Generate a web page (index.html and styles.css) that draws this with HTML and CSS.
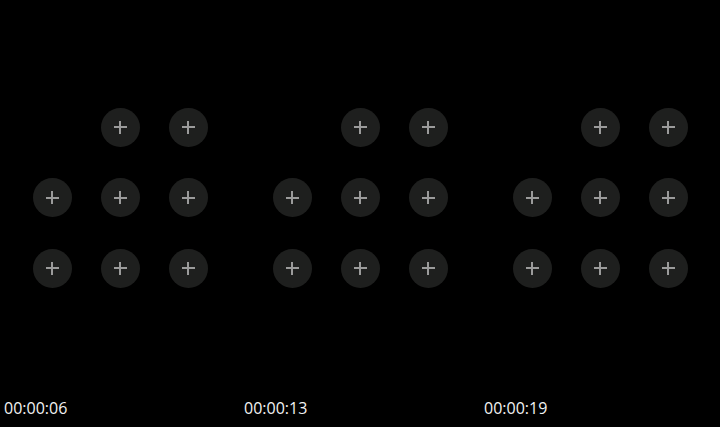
FILE: index.html
```html
<!DOCTYPE html>
<html>
<head>
<meta charset="utf-8">
<link rel="stylesheet" href="styles.css">
</head>
<body>
<div class="strip">
  <section class="panel">
    <div class="grid">
      <div class="slot empty"></div>
      <button class="slot"><span class="plus"></span></button>
      <button class="slot"><span class="plus"></span></button>
      <button class="slot"><span class="plus"></span></button>
      <button class="slot"><span class="plus"></span></button>
      <button class="slot"><span class="plus"></span></button>
      <button class="slot"><span class="plus"></span></button>
      <button class="slot"><span class="plus"></span></button>
      <button class="slot"><span class="plus"></span></button>
    </div>
    <div class="time">00:00:06</div>
  </section>
  <section class="panel">
    <div class="grid">
      <div class="slot empty"></div>
      <button class="slot"><span class="plus"></span></button>
      <button class="slot"><span class="plus"></span></button>
      <button class="slot"><span class="plus"></span></button>
      <button class="slot"><span class="plus"></span></button>
      <button class="slot"><span class="plus"></span></button>
      <button class="slot"><span class="plus"></span></button>
      <button class="slot"><span class="plus"></span></button>
      <button class="slot"><span class="plus"></span></button>
    </div>
    <div class="time">00:00:13</div>
  </section>
  <section class="panel">
    <div class="grid">
      <div class="slot empty"></div>
      <button class="slot"><span class="plus"></span></button>
      <button class="slot"><span class="plus"></span></button>
      <button class="slot"><span class="plus"></span></button>
      <button class="slot"><span class="plus"></span></button>
      <button class="slot"><span class="plus"></span></button>
      <button class="slot"><span class="plus"></span></button>
      <button class="slot"><span class="plus"></span></button>
      <button class="slot"><span class="plus"></span></button>
    </div>
    <div class="time">00:00:19</div>
  </section>
</div>
</body>
</html>
```
FILE: styles.css
```css
html, body {
  margin: 0;
  padding: 0;
  background: #000;
  width: 720px;
  height: 427px;
  overflow: hidden;
}
.strip {
  display: flex;
  height: 427px;
}
.panel {
  width: 240px;
  height: 427px;
  display: flex;
  flex-direction: column;
}
.grid {
  display: grid;
  grid-template-columns: repeat(3, 39px);
  grid-auto-rows: 39px;
  column-gap: 29px;
  row-gap: 31.5px;
  padding: 107.5px 0 0 32.5px;
}
.slot {
  width: 39px;
  height: 39px;
  border: 0;
  padding: 0;
  margin: 0;
  border-radius: 50%;
  background: #1e1f1e;
  display: flex;
  align-items: center;
  justify-content: center;
}
.slot.empty {
  visibility: hidden;
}
.plus {
  position: relative;
  width: 13px;
  height: 13px;
  display: block;
}
.plus::before,
.plus::after {
  content: "";
  position: absolute;
  background: #9b9b9b;
}
.plus::before {
  left: 0;
  top: 5.5px;
  width: 13px;
  height: 2px;
}
.plus::after {
  top: 0;
  left: 5.5px;
  width: 2px;
  height: 13px;
}
.time {
  margin-top: auto;
  padding: 0 0 9px 4px;
  font-family: "Open Sans", "Noto Sans", sans-serif;
  font-size: 16px;
  line-height: 20px;
  color: #f2f2f2;
}
```
